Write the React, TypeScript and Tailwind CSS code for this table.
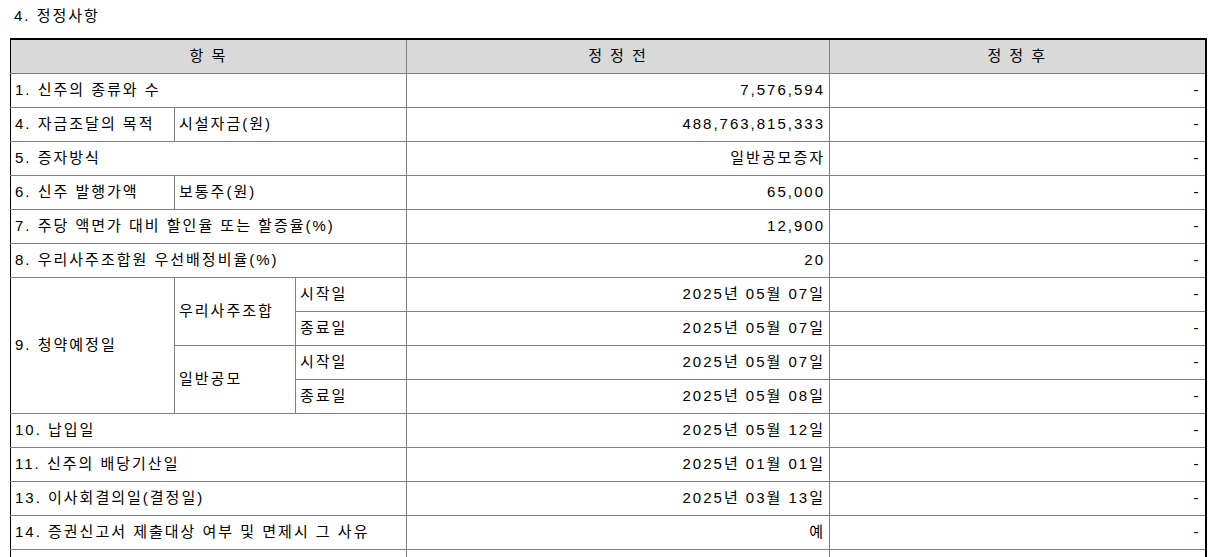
const font = "font-['Liberation_Sans','Noto_Sans_CJK_KR',sans-serif]"

const cell = 'h-[34px] border border-[#808080] px-[4px] align-middle'
const first = 'border-l-black'
const last = 'border-r-2 border-r-black text-right'

type Row = { label: string; sub?: string; value: string }

const simpleRows: Row[] = [
  { label: '1. 신주의 종류와 수', value: '7,576,594' },
  { label: '4. 자금조달의 목적', sub: '시설자금(원)', value: '488,763,815,333' },
  { label: '5. 증자방식', value: '일반공모증자' },
  { label: '6. 신주 발행가액', sub: '보통주(원)', value: '65,000' },
  { label: '7. 주당 액면가 대비 할인율 또는 할증율(%)', value: '12,900' },
  { label: '8. 우리사주조합원 우선배정비율(%)', value: '20' },
]

const tailRows: Row[] = [
  { label: '10. 납입일', value: '2025년 05월 12일' },
  { label: '11. 신주의 배당기산일', value: '2025년 01월 01일' },
  { label: '13. 이사회결의일(결정일)', value: '2025년 03월 13일' },
  { label: '14. 증권신고서 제출대상 여부 및 면제시 그 사유', value: '예' },
]

const SimpleRow = ({ row }: { row: Row }) => (
  <tr>
    {row.sub ? (
      <>
        <td className={`${cell} ${first}`}>{row.label}</td>
        <td className={cell} colSpan={2}>
          {row.sub}
        </td>
      </>
    ) : (
      <td className={`${cell} ${first}`} colSpan={3}>
        {row.label}
      </td>
    )}
    <td className={`${cell} text-right`}>{row.value}</td>
    <td className={`${cell} ${last}`}>-</td>
  </tr>
)

const App = () => {
  return (
    <div className={`${font} bg-white px-[10px] text-[15px] tracking-[2px] text-black`}>
      <p className="pl-[4px] pt-[6px] pb-[12px] leading-[20px]">4. 정정사항</p>
      <table className="w-[1195px] table-fixed border-collapse">
        <colgroup>
          <col className="w-[164px]" />
          <col className="w-[121px]" />
          <col className="w-[111px]" />
          <col className="w-[423px]" />
          <col className="w-[376px]" />
        </colgroup>
        <thead>
          <tr className="bg-[#d9d9d9]">
            <th className={`${cell} ${first} border-t-2 border-t-black text-center font-normal`} colSpan={3}>
              항 목
            </th>
            <th className={`${cell} border-t-2 border-t-black text-center font-normal`}>정 정 전</th>
            <th className={`${cell} border-t-2 border-t-black border-r-2 border-r-black text-center font-normal`}>
              정 정 후
            </th>
          </tr>
        </thead>
        <tbody>
          {simpleRows.map((row) => (
            <SimpleRow key={row.label} row={row} />
          ))}
          <tr>
            <td className={`${cell} ${first}`} rowSpan={4}>
              9. 청약예정일
            </td>
            <td className={cell} rowSpan={2}>
              우리사주조합
            </td>
            <td className={cell}>시작일</td>
            <td className={`${cell} text-right`}>2025년 05월 07일</td>
            <td className={`${cell} ${last}`}>-</td>
          </tr>
          <tr>
            <td className={cell}>종료일</td>
            <td className={`${cell} text-right`}>2025년 05월 07일</td>
            <td className={`${cell} ${last}`}>-</td>
          </tr>
          <tr>
            <td className={cell} rowSpan={2}>
              일반공모
            </td>
            <td className={cell}>시작일</td>
            <td className={`${cell} text-right`}>2025년 05월 07일</td>
            <td className={`${cell} ${last}`}>-</td>
          </tr>
          <tr>
            <td className={cell}>종료일</td>
            <td className={`${cell} text-right`}>2025년 05월 08일</td>
            <td className={`${cell} ${last}`}>-</td>
          </tr>
          {tailRows.map((row) => (
            <SimpleRow key={row.label} row={row} />
          ))}
          <tr>
            <td className={`${cell} ${first}`} colSpan={3}></td>
            <td className={cell}></td>
            <td className={`${cell} ${last}`}></td>
          </tr>
        </tbody>
      </table>
    </div>
  )
}

export default App
